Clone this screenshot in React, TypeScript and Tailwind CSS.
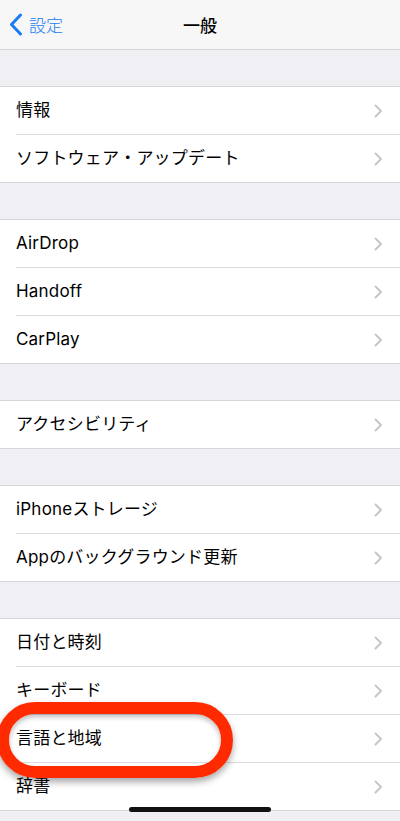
import React from "react";

const Chevron = () => (
  <svg width="9" height="14" viewBox="0 0 9 14" fill="none" className="shrink-0">
    <path d="M1.5 1.5L7 7L1.5 12.5" stroke="#c4c4c9" strokeWidth="1.8" strokeLinecap="round" strokeLinejoin="round" />
  </svg>
);

function Row({ label, last, children }: { label: string; last?: boolean; children?: React.ReactNode }) {
  return (
    <div className={`relative h-[48px] flex items-stretch pl-4 ${last ? "border-b border-[#d6d6da]" : ""}`}>
      <div className={`flex-1 flex items-center pr-[17px] ${last ? "" : "border-b border-[#dcdce0]"}`}>
        <span className="flex-1 text-[17px] text-black tracking-[0.2px]">{label}</span>
        <Chevron />
      </div>
      {children}
    </div>
  );
}

function Group({ items, oval }: { items: string[]; oval?: string }) {
  return (
    <>
      <div className="h-[36px]" />
      <div className="bg-white border-t border-[#d6d6da]">
        {items.map((t, i) => (
          <Row key={t} label={t} last={i === items.length - 1}>
            {oval === t && (
              <div className="absolute left-[-3px] top-[-13px] w-[236px] h-[76px] rounded-full border-[12px] border-[#ff2a00] shadow-[0_4px_7px_rgba(0,0,0,0.35),inset_0_3px_5px_rgba(0,0,0,0.25)] z-10" />
            )}
          </Row>
        ))}
      </div>
    </>
  );
}

export default function App() {
  return (
    <div className="relative w-[400px] h-[821px] overflow-hidden bg-[#efeff4] font-['Inter','Noto_Sans_CJK_JP',sans-serif]">
      <div className="h-[50px] bg-[#f7f7f8] border-b border-[#d6d6da] relative flex items-center">
        <div className="flex items-center pl-[9px] gap-[6px] text-[#1a7cf5]">
          <svg width="14" height="23" viewBox="0 0 14 23" fill="none">
            <path d="M11.5 2L2.5 11.5L11.5 21" stroke="#1a7cf5" strokeWidth="3" strokeLinecap="round" strokeLinejoin="round" />
          </svg>
          <span className="text-[17px] font-['Noto_Sans_CJK_JP',sans-serif] font-light">設定</span>
        </div>
        <div className="absolute inset-0 flex items-center justify-center pointer-events-none">
          <span className="text-[17px] font-medium text-black font-['Noto_Sans_CJK_JP',sans-serif]">一般</span>
        </div>
      </div>
      <Group items={["情報", "ソフトウェア・アップデート"]} />
      <Group items={["AirDrop", "Handoff", "CarPlay"]} />
      <Group items={["アクセシビリティ"]} />
      <Group items={["iPhoneストレージ", "Appのバックグラウンド更新"]} />
      <Group items={["日付と時刻", "キーボード", "言語と地域", "辞書"]} oval="言語と地域" />
      <div className="absolute left-[129px] top-[807px] w-[142px] h-[5px] rounded-full bg-[#111]" />
    </div>
  );
}
